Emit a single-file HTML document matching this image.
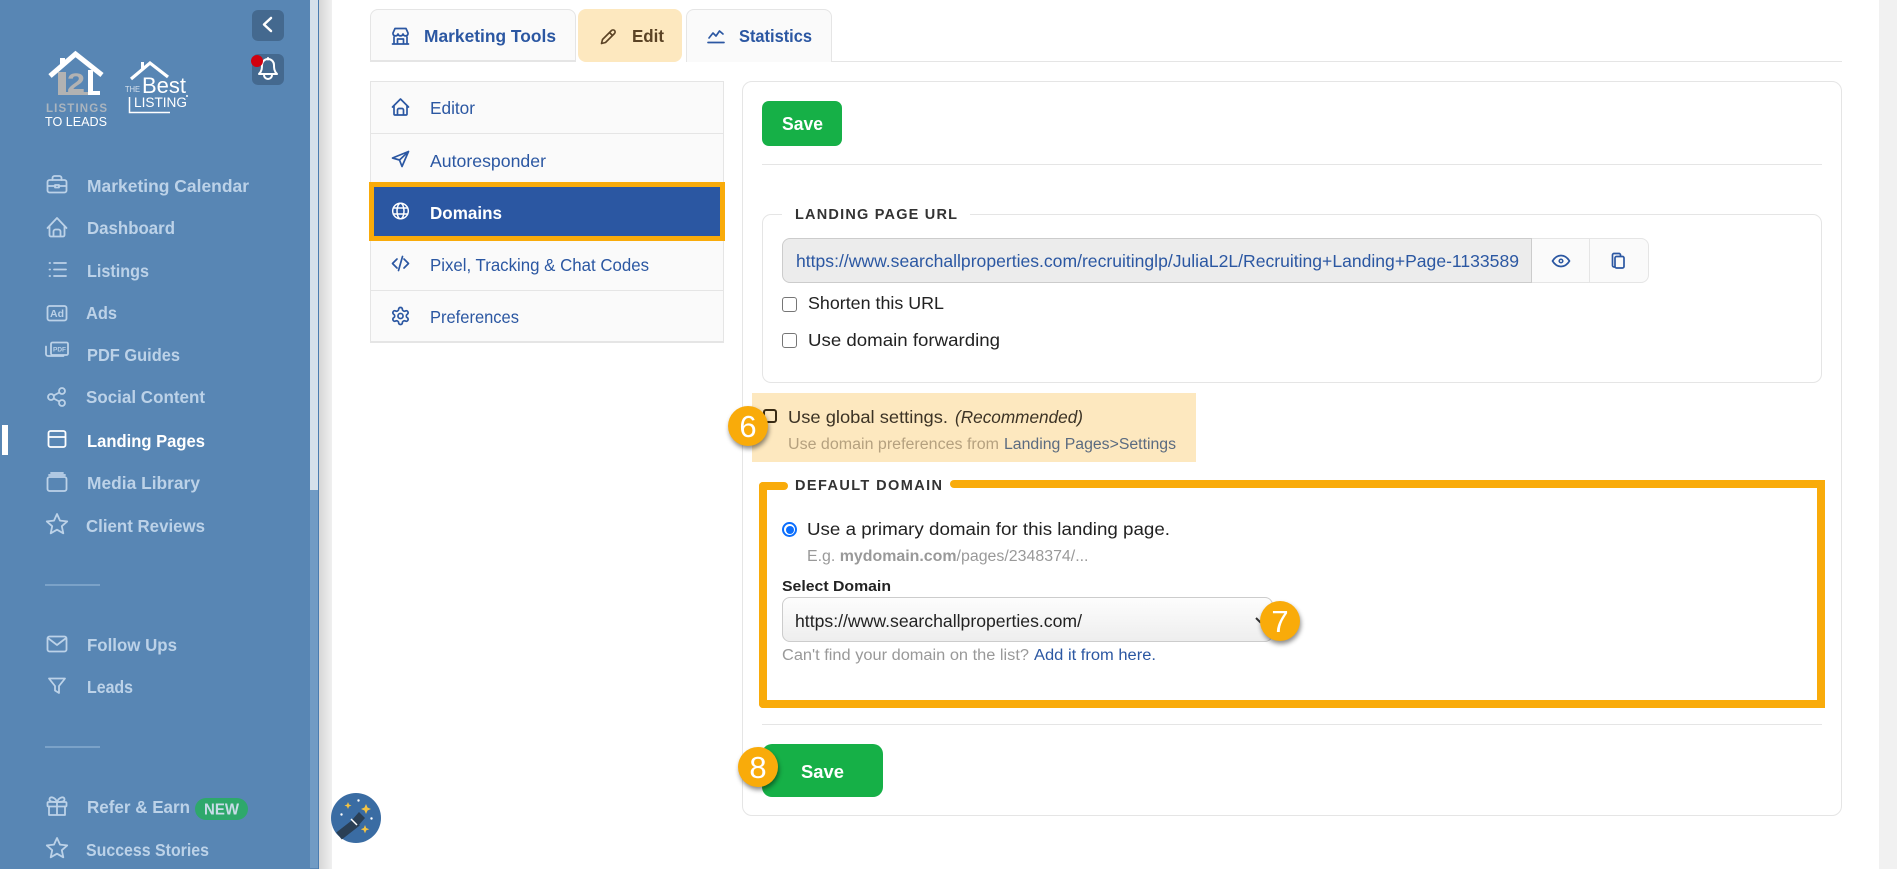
<!DOCTYPE html>
<html lang="en">
<head>
<meta charset="utf-8">
<title>Domains</title>
<style>
html,body{margin:0;padding:0;width:1897px;height:869px;overflow:hidden;background:#fff;font-family:"Liberation Sans",sans-serif}
.a{position:absolute;box-sizing:border-box}
svg{position:absolute;left:0;top:0}
text{font-family:"Liberation Sans",sans-serif}
.s{font-size:17.5px;font-weight:700;fill:#bcd2e8}
.m{font-size:17.5px;fill:#2b57a2}
.t{font-size:17.5px;font-weight:700;fill:#2b57a2}
.d{font-size:17.5px;fill:#222}
.g{font-size:15.5px;fill:#999}
.l{font-size:14.5px;font-weight:700;fill:#333}
.i{fill:none;stroke:#bcd2e8;stroke-width:1.8;stroke-linecap:round;stroke-linejoin:round}
.b{fill:none;stroke:#2b57a2;stroke-width:1.7;stroke-linecap:round;stroke-linejoin:round}
.badge{position:absolute;width:40px;height:40px;border-radius:50%;background:#f9ab0a;color:#fff;font-size:31px;line-height:41px;text-align:center;box-shadow:1px 3px 5px rgba(0,0,0,.45);z-index:5}
</style>
</head>
<body>
<!-- sidebar -->
<div class="a" style="left:0;top:0;width:319px;height:869px;background:#5886b4"></div>
<div class="a" style="left:310px;top:0;width:8px;height:490px;background:#d5e0eb"></div>
<div class="a" style="left:310px;top:490px;width:8px;height:378px;background:#719bc4"></div>
<div class="a" style="left:318px;top:0;width:1px;height:869px;background:#4a7cb0"></div>
<div class="a" style="left:319px;top:0;width:13px;height:869px;background:linear-gradient(90deg,#d6d6d6,#f0f0f0)"></div>
<div class="a" style="left:252px;top:10px;width:32px;height:31px;border-radius:6px;background:#44698f"></div>
<div class="a" style="left:252px;top:54px;width:32px;height:31px;border-radius:6px;background:#44698f"></div>
<div class="a" style="left:2px;top:425px;width:6px;height:30px;background:#fff"></div>
<div class="a" style="left:45px;top:584px;width:55px;height:2px;background:#7ba2c8"></div>
<div class="a" style="left:45px;top:746px;width:55px;height:2px;background:#7ba2c8"></div>
<div class="a" style="left:195px;top:798px;width:53px;height:22px;border-radius:11px;background:#2ea86b"></div>
<!-- page scrollbar -->
<div class="a" style="left:1879px;top:0;width:18px;height:869px;background:#f1f1f1"></div>
<!-- tabs -->
<div class="a" style="left:832px;top:61px;width:1010px;height:1px;background:#e5e5e5"></div>
<div class="a" style="left:370px;top:9px;width:206px;height:53px;background:#fafafa;border:1px solid #e5e5e5;border-bottom-width:2px;border-radius:8px 8px 0 0"></div>
<div class="a" style="left:578px;top:9px;width:104px;height:53px;background:#fde8bf;border-radius:8px"></div>
<div class="a" style="left:686px;top:9px;width:146px;height:53px;background:#fafafa;border:1px solid #e5e5e5;border-bottom-width:0;border-radius:8px 8px 0 0"></div>
<!-- side menu -->
<div class="a" style="left:370px;top:81px;width:354px;height:262px;background:#fafafa;border:1px solid #e5e5e5;border-bottom-width:2px"></div>
<div class="a" style="left:371px;top:133px;width:352px;height:1px;background:#e5e5e5"></div>
<div class="a" style="left:371px;top:290px;width:352px;height:1px;background:#e5e5e5"></div>
<div class="a" style="left:369px;top:182px;width:356px;height:59px;background:#2b57a2;border:5px solid #f9ab0a"></div>
<!-- card -->
<div class="a" style="left:742px;top:81px;width:1100px;height:735px;border:1px solid #e5e5e5;border-radius:10px;background:#fff"></div>
<div class="a" style="left:762px;top:101px;width:80px;height:45px;border-radius:7px;background:#16b047"></div>
<div class="a" style="left:762px;top:164px;width:1060px;height:1px;background:#e5e5e5"></div>
<!-- landing page url -->
<div class="a" style="left:762px;top:214px;width:1060px;height:169px;border:1px solid #e5e5e5;border-radius:9px"></div>
<div class="a" style="left:782px;top:212px;width:188px;height:4px;background:#fff"></div>
<div class="a" style="left:782px;top:238px;width:750px;height:45px;background:#ececec;border:1px solid #ccc;border-radius:8px 0 0 8px"></div>
<div class="a" style="left:1532px;top:238px;width:117px;height:45px;background:#fafafa;border:1px solid #e5e5e5;border-left:0;border-radius:0 8px 8px 0"></div>
<div class="a" style="left:1589px;top:238px;width:1px;height:45px;background:#e5e5e5"></div>
<div class="a" style="left:782px;top:297px;width:15px;height:15px;background:#fff;border:1px solid #767676;border-radius:3px"></div>
<div class="a" style="left:782px;top:333px;width:15px;height:15px;background:#fff;border:1px solid #767676;border-radius:3px"></div>
<!-- global -->
<div class="a" style="left:752px;top:393px;width:444px;height:69px;background:#fde8bf"></div>
<div class="a" style="left:763px;top:409px;width:14px;height:14px;border:2px solid #3a2c14;border-radius:3px"></div>
<!-- default domain -->
<div class="a" style="left:759px;top:482px;width:8px;height:226px;background:#f9ab0a;border-radius:4px 0 0 4px"></div>
<div class="a" style="left:759px;top:482px;width:29px;height:8px;background:#f9ab0a;border-radius:4px"></div>
<div class="a" style="left:950px;top:480px;width:875px;height:8px;background:#f9ab0a;border-radius:4px 2px 0 4px"></div>
<div class="a" style="left:1817px;top:480px;width:8px;height:228px;background:#f9ab0a"></div>
<div class="a" style="left:759px;top:700px;width:1066px;height:8px;background:#f9ab0a;border-radius:0 0 0 4px"></div>
<div class="a" style="left:782px;top:522px;width:15px;height:15px;border-radius:50%;background:#fff;border:2px solid #0b6efd"></div>
<div class="a" style="left:785.5px;top:525.5px;width:8px;height:8px;border-radius:50%;background:#0b6efd"></div>
<div class="a" style="left:782px;top:597px;width:491px;height:45px;border:1px solid #ccc;border-radius:8px;background:linear-gradient(#fdfdfd,#eee)"></div>
<div class="a" style="left:762px;top:724px;width:1060px;height:1px;background:#e5e5e5"></div>
<div class="a" style="left:762px;top:744px;width:121px;height:53px;border-radius:10px;background:#16b047"></div>

<svg width="1897" height="869" viewBox="0 0 1897 869" xmlns="http://www.w3.org/2000/svg">
<!-- collapse + bell -->
<path d="M271 18l-7 6.500 7 6.500" fill="none" stroke="#fff" stroke-width="2.500" stroke-linecap="round" stroke-linejoin="round"/>
<path d="M259 74c3-3 3-6 3-9a6 6 0 0 1 12 0c0 3 0 6 3 9zM264 75a4 4 0 0 0 8 0M268 58v1.500" fill="none" stroke="#fff" stroke-width="2" stroke-linecap="round" stroke-linejoin="round"/>
<circle cx="257" cy="61" r="6" fill="#d0000f"/>
<!-- L2L logo -->
<path d="M60 66v-8h5v5z" fill="#fff"/>
<path d="M58 72h8v20h22v3H58z" fill="#b2b2b2"/>
<text x="67" y="92" font-size="27" font-weight="700" fill="#b2b2b2" textLength="18" lengthAdjust="spacingAndGlyphs">2</text>
<path d="M88 70h5v21h7v4H88z" fill="#fff"/>
<path d="M50 76L75.500 54L102 75" fill="none" stroke="#fff" stroke-width="5"/>
<text x="46" y="112" font-size="11.500" font-weight="700" fill="#aab4be" textLength="61" lengthAdjust="spacing">LISTINGS</text>
<text x="45" y="126" font-size="13" fill="#fff" textLength="62" lengthAdjust="spacingAndGlyphs">TO LEADS</text>
<!-- best logo -->
<path d="M141 70v-8h3v5z" fill="#fff"/>
<path d="M131 79L150 63L168 77" fill="none" stroke="#fff" stroke-width="3.200"/>
<text x="125" y="92" font-size="8" fill="#d7e2ee" textLength="15" lengthAdjust="spacingAndGlyphs">THE</text>
<text x="142" y="93" font-size="22" fill="#fff" textLength="44" lengthAdjust="spacingAndGlyphs">Best</text>
<path d="M129.500 97v15.500H170" fill="none" stroke="#fff" stroke-width="1.500"/>
<text x="134" y="107" font-size="13.500" fill="#fff" textLength="53" lengthAdjust="spacingAndGlyphs">LISTING</text>
<circle cx="187" cy="96" r="1" fill="#fff"/>

<!-- sidebar icons -->
<g class="i">
<rect x="47.500" y="180" width="19" height="12.500" rx="2"/><path d="M52.500 180v-2a2 2 0 0 1 2-2h5a2 2 0 0 1 2 2v2M48 186h7M59 186h7"/><rect x="55" y="185" width="4" height="2.500"/>
<path d="M47.500 228L57 218L66.500 228M49.500 226v9a1.500 1.500 0 0 0 1.500 1.500h12a1.500 1.500 0 0 0 1.500-1.500v-9M53.500 236.500v-5a2 2 0 0 1 2-2h3a2 2 0 0 1 2 2v5"/>
<path d="M54 263h12M54 269.500h12M54 276h12M49.500 263h.6M49.500 269.500h.6M49.500 276h.6"/>
<rect x="47.500" y="306" width="19" height="14.500" rx="2"/>
<rect x="51" y="342.500" width="17" height="12.500" rx="1.500"/><path d="M46 346.500v7.500a2 2 0 0 0 2 2h15.500"/>
<circle cx="62" cy="391" r="3"/><circle cx="51" cy="397" r="3"/><circle cx="62" cy="403" r="3"/><path d="M53.700 395.500l5.600-3M53.700 398.500l5.600 3"/>
<rect x="47.500" y="477" width="19" height="14" rx="2"/><path d="M51 473h12M49 475h16"/>
<path d="M57 514l3 6.600 7.200.8-5.400 4.800 1.500 7.100-6.300-3.600-6.300 3.600 1.500-7.100-5.400-4.800 7.200-.8z"/>
<rect x="47.500" y="636.500" width="19" height="15" rx="2"/><path d="M48.500 638.500L57 645L65.500 638.500"/>
<path d="M49 678.500h16l-6 7.500v7l-4-2.500v-4.500z"/>
<rect x="47.500" y="802" width="19" height="4.500" rx="1"/><path d="M49 806.500V815h16v-8.500M57 802v13M57 802c-2-5-7-6-7.500-3s4 3 7.500 3c3.500 0 8 0 7.500-3s-5.500-2-7.500 3"/>
<path d="M57 838l3 6.600 7.200.8-5.400 4.800 1.500 7.100-6.300-3.600-6.300 3.600 1.500-7.100-5.400-4.800 7.200-.8z"/>
</g>
<text x="50" y="317" font-size="10" font-weight="700" fill="#bcd2e8" textLength="14" lengthAdjust="spacingAndGlyphs">Ad</text>
<text x="53" y="351.500" font-size="6.500" font-weight="700" fill="#bcd2e8" textLength="13" lengthAdjust="spacingAndGlyphs">PDF</text>
<rect x="48.500" y="431" width="17" height="16" rx="2" fill="none" stroke="#fff" stroke-width="1.800"/>
<path d="M48.500 437h17" fill="none" stroke="#fff" stroke-width="1.800"/>

<!-- sidebar text -->
<text class="s" x="87" y="192" textLength="162" lengthAdjust="spacingAndGlyphs">Marketing Calendar</text>
<text class="s" x="87" y="234" textLength="88" lengthAdjust="spacingAndGlyphs">Dashboard</text>
<text class="s" x="87" y="277" textLength="62" lengthAdjust="spacingAndGlyphs">Listings</text>
<text class="s" x="86" y="319" textLength="31" lengthAdjust="spacingAndGlyphs">Ads</text>
<text class="s" x="87" y="361" textLength="93" lengthAdjust="spacingAndGlyphs">PDF Guides</text>
<text class="s" x="86" y="403" textLength="119" lengthAdjust="spacingAndGlyphs">Social Content</text>
<text class="s" x="87" y="447" textLength="118" lengthAdjust="spacingAndGlyphs" style="fill:#fff">Landing Pages</text>
<text class="s" x="87" y="489" textLength="113" lengthAdjust="spacingAndGlyphs">Media Library</text>
<text class="s" x="86" y="532" textLength="119" lengthAdjust="spacingAndGlyphs">Client Reviews</text>
<text class="s" x="87" y="651" textLength="90" lengthAdjust="spacingAndGlyphs">Follow Ups</text>
<text class="s" x="87" y="693" textLength="46" lengthAdjust="spacingAndGlyphs">Leads</text>
<text class="s" x="87" y="813" textLength="103" lengthAdjust="spacingAndGlyphs">Refer &amp; Earn</text>
<text x="204" y="814.500" font-size="15.500" font-weight="700" fill="#c8dce8" textLength="35" lengthAdjust="spacingAndGlyphs">NEW</text>
<text class="s" x="86" y="856" textLength="123" lengthAdjust="spacingAndGlyphs">Success Stories</text>

<!-- magic wand -->
<circle cx="356" cy="818" r="25" fill="#3a6ca3"/>
<path d="M339 836l18-14" stroke="#2a3f55" stroke-width="9" fill="none"/>
<path d="M352 820l6 6 7-8-6-6z" fill="#2a3f55"/>
<path d="M351 819l6 6" stroke="#fff" stroke-width="1.500" fill="none"/>
<path d="M366 804l1.500 3.500 3.500 1.500-3.500 1.500-1.500 3.500-1.500-3.500-3.500-1.500 3.500-1.500z" fill="#f4c342"/>
<path d="M348 802l1 2.500 2.500 1-2.500 1-1 2.500-1-2.500-2.500-1 2.500-1z" fill="#f4c342"/>
<path d="M365 825l1.200 3 3 1.200-3 1.200-1.200 3-1.200-3-3-1.200 3-1.200z" fill="#f4c342"/>
<circle cx="341.500" cy="814.500" r="1.200" fill="#fff"/><circle cx="358.500" cy="800.500" r="1.200" fill="#fff"/><circle cx="371.500" cy="818.500" r="1.200" fill="#fff"/>

<!-- tabs -->
<path class="b" d="M393 33l2-4.500h11l2 4.500v1a2.600 2.600 0 0 1-5 0 2.600 2.600 0 0 1-5 0 2.600 2.600 0 0 1-5 0zM394 37v7h13v-7M392.500 44h16M397.500 44v-5h6v5"/>
<text class="t" x="424" y="42" textLength="132" lengthAdjust="spacingAndGlyphs">Marketing Tools</text>
<path d="M601.500 43.500l1-4 9-9a2 2 0 0 1 3 3l-9 9zM609.500 32.500l3 3" fill="none" stroke="#5b4325" stroke-width="1.600" stroke-linejoin="round"/>
<text x="632" y="42" font-size="17.500" font-weight="700" fill="#5b4325" textLength="32" lengthAdjust="spacingAndGlyphs">Edit</text>
<path class="b" d="M709 38l4-5 3 3 3.500-5 3.500 3M708 42.500h16"/>
<text class="t" x="739" y="42" textLength="73" lengthAdjust="spacingAndGlyphs">Statistics</text>

<!-- side menu -->
<path class="b" d="M392.500 107L400.500 99L408.500 107M394 105.500V114a1 1 0 0 0 1 1h11a1 1 0 0 0 1-1v-8.500M397.500 115v-5a1.500 1.500 0 0 1 1.500-1.500h3a1.500 1.500 0 0 1 1.500 1.500v5"/>
<text class="m" x="430" y="114" textLength="45" lengthAdjust="spacingAndGlyphs">Editor</text>
<path class="b" d="M392.500 158L408.500 151.500L402 166.500L399.500 160zM399.500 160L408.500 151.500"/>
<text class="m" x="430" y="167" textLength="116" lengthAdjust="spacingAndGlyphs">Autoresponder</text>
<g fill="none" stroke="#fff" stroke-width="1.500"><circle cx="400.500" cy="211" r="7.800"/><ellipse cx="400.500" cy="211" rx="3.500" ry="7.800"/><path d="M393 208h15M393 214h15"/></g>
<text x="430" y="219" font-size="17.500" font-weight="700" fill="#fff" textLength="72" lengthAdjust="spacingAndGlyphs">Domains</text>
<path class="b" d="M397 259l-4.500 4.500 4.500 4.500M404 259l4.500 4.500-4.500 4.500M402.500 256.500l-4 14"/>
<text class="m" x="430" y="271" textLength="219" lengthAdjust="spacingAndGlyphs">Pixel, Tracking &amp; Chat Codes</text>
<g class="b" transform="translate(390.300 305.800) scale(.85)" style="stroke-width:2"><path d="M12.220 2h-.44a2 2 0 0 0-2 2v.18a2 2 0 0 1-1 1.730l-.43.25a2 2 0 0 1-2 0l-.15-.08a2 2 0 0 0-2.730.73l-.22.38a2 2 0 0 0 .73 2.730l.15.1a2 2 0 0 1 1 1.720v.51a2 2 0 0 1-1 1.740l-.15.09a2 2 0 0 0-.73 2.730l.22.38a2 2 0 0 0 2.730.73l.15-.08a2 2 0 0 1 2 0l.43.25a2 2 0 0 1 1 1.730V20a2 2 0 0 0 2 2h.44a2 2 0 0 0 2-2v-.18a2 2 0 0 1 1-1.730l.43-.25a2 2 0 0 1 2 0l.15.08a2 2 0 0 0 2.730-.73l.22-.39a2 2 0 0 0-.73-2.730l-.15-.08a2 2 0 0 1-1-1.740v-.5a2 2 0 0 1 1-1.740l.15-.09a2 2 0 0 0 .73-2.730l-.22-.38a2 2 0 0 0-2.730-.73l-.15.08a2 2 0 0 1-2 0l-.43-.25a2 2 0 0 1-1-1.730V4a2 2 0 0 0-2-2z"/><circle cx="12" cy="12" r="3"/></g>
<text class="m" x="430" y="323" textLength="89" lengthAdjust="spacingAndGlyphs">Preferences</text>

<!-- card text -->
<text x="782" y="130" font-size="18" font-weight="700" fill="#fff" textLength="41" lengthAdjust="spacingAndGlyphs">Save</text>
<text class="l" x="795" y="219" textLength="162" lengthAdjust="spacing">LANDING PAGE URL</text>
<text class="m" x="796" y="267" textLength="723" lengthAdjust="spacingAndGlyphs">https://www.searchallproperties.com/recruitinglp/JuliaL2L/Recruiting+Landing+Page-1133589</text>
<path class="b" d="M1552.500 261c2.500-4 5.300-5.500 8.500-5.500s6 1.500 8.500 5.500c-2.500 4-5.300 5.500-8.500 5.500s-6-1.500-8.500-5.500z"/><circle cx="1561" cy="261" r="1.800" fill="none" stroke="#2b57a2" stroke-width="1.500"/>
<path class="b" d="M1614.500 267h-.5a1.500 1.500 0 0 1-1.500-1.500V255a1.500 1.500 0 0 1 1.500-1.500h5a1.500 1.500 0 0 1 1.500 1.500v1"/><rect x="1615" y="256.500" width="9" height="11.500" rx="1.500" class="b"/>
<text class="d" x="808" y="309" textLength="136" lengthAdjust="spacingAndGlyphs">Shorten this URL</text>
<text class="d" x="808" y="346" textLength="192" lengthAdjust="spacingAndGlyphs">Use domain forwarding</text>
<text x="788" y="423" font-size="17.500" fill="#3c3325" textLength="160" lengthAdjust="spacingAndGlyphs">Use global settings.</text>
<text x="955" y="423" font-size="17.500" font-style="italic" fill="#3c3325" textLength="128" lengthAdjust="spacingAndGlyphs">(Recommended)</text>
<text x="788" y="449" font-size="15.500" fill="#b5a17f" textLength="211" lengthAdjust="spacingAndGlyphs">Use domain preferences from</text>
<text x="1004" y="449" font-size="15.500" fill="#5b6b80" textLength="172" lengthAdjust="spacingAndGlyphs">Landing Pages&gt;Settings</text>
<text class="l" x="795" y="490" textLength="147" lengthAdjust="spacing">DEFAULT DOMAIN</text>
<text class="d" x="807" y="535" textLength="363" lengthAdjust="spacingAndGlyphs">Use a primary domain for this landing page.</text>
<text class="g" x="807" y="561" textLength="281.500" lengthAdjust="spacingAndGlyphs">E.g. <tspan font-weight="700">mydomain.com</tspan>/pages/2348374/...</text>
<text x="782" y="591" font-size="15" font-weight="700" fill="#222" textLength="109" lengthAdjust="spacingAndGlyphs">Select Domain</text>
<text class="d" x="795" y="627" textLength="287" lengthAdjust="spacingAndGlyphs">https://www.searchallproperties.com/</text>
<path d="M1256 618l4 4 4-4" fill="none" stroke="#333" stroke-width="2"/>
<text class="g" x="782" y="660" textLength="247" lengthAdjust="spacingAndGlyphs">Can't find your domain on the list?</text>
<text x="1034" y="660" font-size="15.500" fill="#2b57a2" textLength="122" lengthAdjust="spacingAndGlyphs">Add it from here.</text>
<text x="801" y="778" font-size="18" font-weight="700" fill="#fff" textLength="43" lengthAdjust="spacingAndGlyphs">Save</text>
</svg>

<div class="badge" style="left:728px;top:406px">6</div>
<div class="badge" style="left:1260px;top:601px">7</div>
<div class="badge" style="left:738px;top:747px">8</div>
</body>
</html>
